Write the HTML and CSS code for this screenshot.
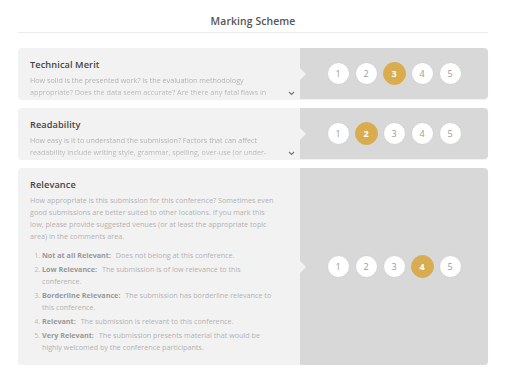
FILE: index.html
```html
<!DOCTYPE html>
<html>
<head>
<meta charset="utf-8">
<link rel="stylesheet" href="styles.css">
</head>
<body>
<div class="page">
  <h1 class="heading">Marking Scheme</h1>

  <div class="card card-short">
    <div class="info">
      <h2 class="title">Technical Merit</h2>
      <p class="desc desc-fade">How solid is the presented work? Is the evaluation methodology appropriate? Does the data seem accurate? Are there any fatal flaws in the reasoning or the experiments?</p>
      <svg class="chevron" width="7" height="5" viewBox="0 0 7 5"><path d="M1 1 L3.5 3.5 L6 1" fill="none" stroke="#777" stroke-width="1.1"/></svg>
    </div>
    <div class="score">
      <span class="dot">1</span><span class="dot">2</span><span class="dot on">3</span><span class="dot">4</span><span class="dot">5</span>
    </div>
  </div>

  <div class="card card-short">
    <div class="info">
      <h2 class="title">Readability</h2>
      <p class="desc desc-fade">How easy is it to understand the submission? Factors that can affect readability include writing style, grammar, spelling, over-use (or under-use) of jargon, and the structure of the paper.</p>
      <svg class="chevron" width="7" height="5" viewBox="0 0 7 5"><path d="M1 1 L3.5 3.5 L6 1" fill="none" stroke="#777" stroke-width="1.1"/></svg>
    </div>
    <div class="score">
      <span class="dot">1</span><span class="dot on">2</span><span class="dot">3</span><span class="dot">4</span><span class="dot">5</span>
    </div>
  </div>

  <div class="card">
    <div class="info">
      <h2 class="title">Relevance</h2>
      <p class="desc">How appropriate is this submission for this conference? Sometimes even good submissions are better suited to other locations. If you mark this low, please provide suggested venues (or at least the appropriate topic area) in the comments area.</p>
      <ol class="levels">
        <li><b>Not at all Relevant:</b> Does not belong at this conference.</li>
        <li><b>Low Relevance:</b> The submission is of low relevance to this conference.</li>
        <li><b>Borderline Relevance:</b> The submission has borderline relevance to this conference.</li>
        <li><b>Relevant:</b> The submission is relevant to this conference.</li>
        <li><b>Very Relevant:</b> The submission presents material that would be highly welcomed by the conference participants.</li>
      </ol>
    </div>
    <div class="score">
      <span class="dot">1</span><span class="dot">2</span><span class="dot">3</span><span class="dot on">4</span><span class="dot">5</span>
    </div>
  </div>
</div>
</body>
</html>
```

FILE: styles.css
```css
* { box-sizing: border-box; }
html, body { margin: 0; padding: 0; background: #fff; }
body { font-family: "Open Sans", "Noto Sans", sans-serif; }

.page {
  padding: 13px 18px 0;
  display: flex;
  flex-direction: column;
  gap: 9px;
}

.heading {
  margin: 0 0 6px;
  font-size: 10.4px;
  line-height: 17px;
  font-weight: 600;
  color: #555;
  text-align: center;
  padding-bottom: 2px;
  border-bottom: 1px solid #ececec;
  letter-spacing: 0.1px;
}

.card {
  display: flex;
  border-radius: 4px;
  overflow: hidden;
  box-shadow: 0 1px 1px rgba(0,0,0,0.06);
}

.card-short { height: 51px; }

.info {
  position: relative;
  width: 282px;
  flex: none;
  background: #f2f2f2;
  padding: 10px 12px 12px;
  overflow: hidden;
}

.title {
  margin: 0 0 2px;
  font-size: 9.2px;
  line-height: 14px;
  font-weight: 600;
  color: #444;
  letter-spacing: 0.1px;
}

.desc {
  margin: 0;
  font-size: 7.2px;
  line-height: 12px;
  color: #b3b3b3;
  padding-right: 12px;
}

.desc-fade {
  -webkit-mask-image: linear-gradient(to bottom, #000 45%, rgba(0,0,0,0.35) 85%);
  mask-image: linear-gradient(to bottom, #000 45%, rgba(0,0,0,0.35) 85%);
}

.chevron {
  position: absolute;
  right: 5px;
  bottom: 3px;
}

.levels {
  margin: 7px 0 0;
  padding: 0 0 0 12px;
  font-size: 7.2px;
  line-height: 12px;
  color: #b3b3b3;
  display: flex;
  flex-direction: column;
  gap: 2px;
}

.levels li { padding-right: 12px; }
.levels li::marker { color: #bbb; }
.levels b { color: #999; font-weight: 700; margin-right: 3px; }

.score {
  position: relative;
  flex: 1;
  background: #d8d8d8;
  display: flex;
  align-items: center;
  justify-content: center;
  gap: 5px;
}

.score::before {
  content: "";
  position: absolute;
  left: 0;
  top: 50%;
  margin-top: -6px;
  border-top: 6px solid transparent;
  border-bottom: 6px solid transparent;
  border-left: 6px solid #f2f2f2;
}

.dot {
  width: 23px;
  height: 23px;
  border-radius: 50%;
  background: #fff;
  border: 1px solid #d0d0d0;
  display: flex;
  align-items: center;
  justify-content: center;
  font-size: 9px;
  color: #9a9a9a;
}

.dot.on {
  background: #d9ad4f;
  border-color: #d9ad4f;
  color: #fff;
  font-weight: 700;
}
```
